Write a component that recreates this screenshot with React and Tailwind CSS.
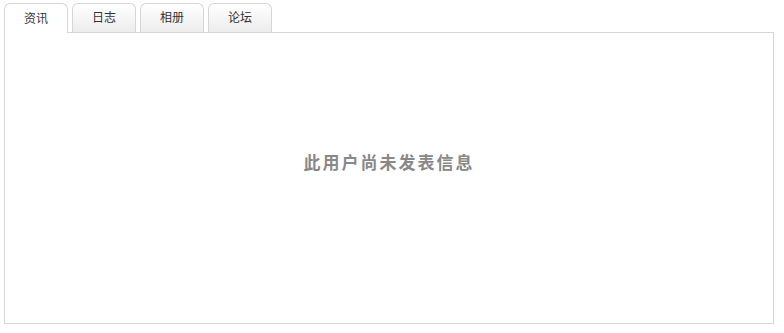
const tabs = ["资讯", "日志", "相册", "论坛"];

export default function App() {
  return (
    <div
      className="h-[333px] w-[784px] bg-white pl-1 pt-[3px]"
      style={{ fontFamily: '"Liberation Sans", "Noto Sans CJK SC", sans-serif' }}
    >
      <div className="flex gap-1">
        {tabs.map((t, i) => (
          <div
            key={t}
            className={
              i === 0
                ? "relative z-10 -mb-px flex h-[30px] w-16 items-center justify-center rounded-t-[6px] border border-b-0 border-[#d6d6d6] bg-white text-xs text-[#333]"
                : "flex h-[29px] w-16 items-center justify-center rounded-t-[6px] border border-b-0 border-[#d6d6d6] bg-gradient-to-b from-white to-[#ececec] text-xs text-[#333]"
            }
          >
            {t}
          </div>
        ))}
      </div>
      <div className="flex h-[292px] w-[770px] items-center justify-center border border-[#d6d6d6] pb-[28px]">
        <p className="text-[17px] font-bold tracking-[2px] text-[#888]">此用户尚未发表信息</p>
      </div>
    </div>
  );
}
